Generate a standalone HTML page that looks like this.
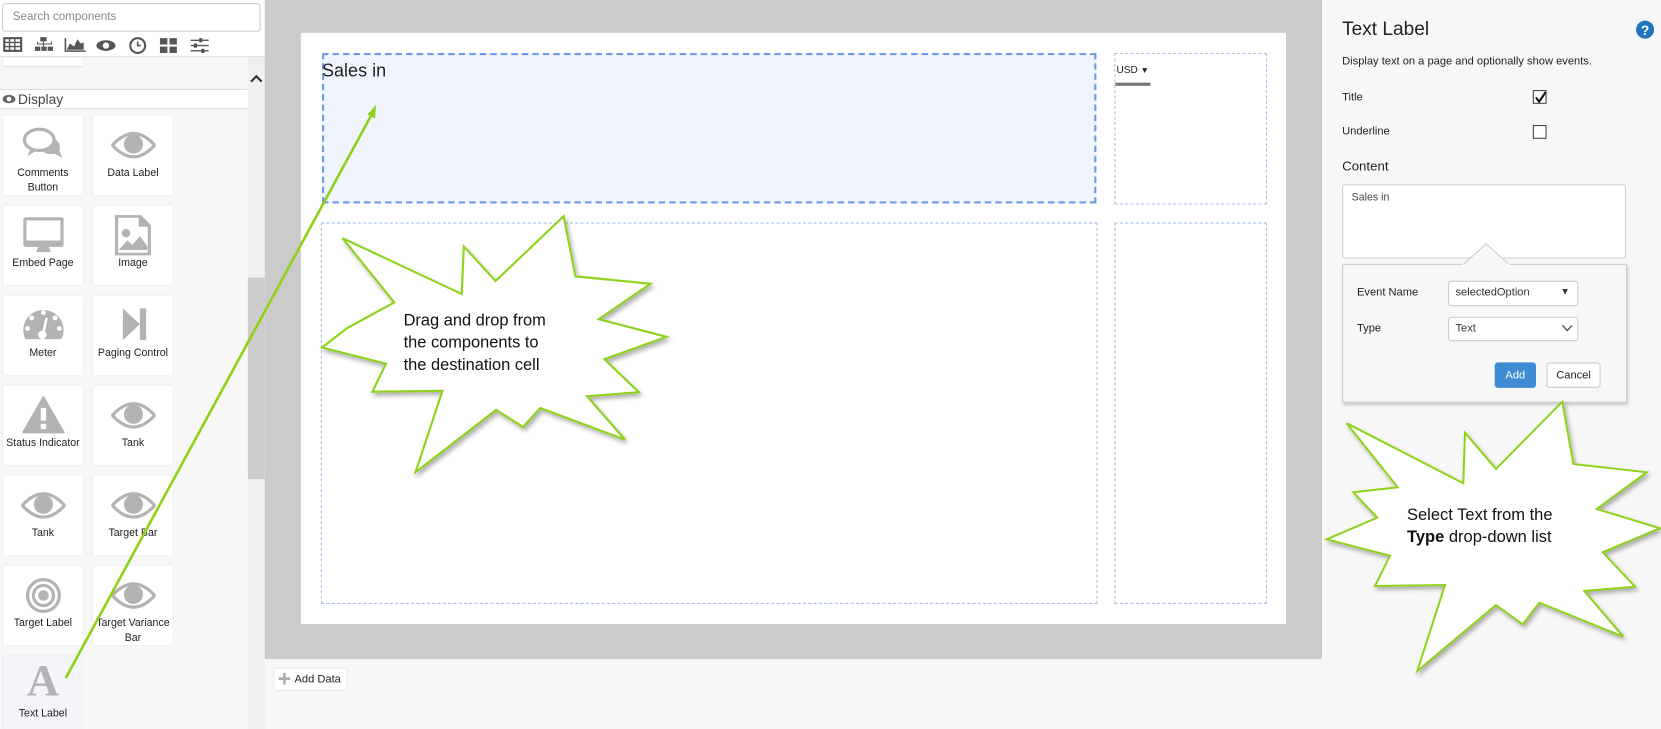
<!DOCTYPE html>
<html><head><meta charset="utf-8">
<style>
*{box-sizing:border-box;margin:0;padding:0}
html,body{width:1661px;height:729px;overflow:hidden;background:#f7f7f7;font-family:"Liberation Sans",sans-serif}
#c{position:absolute;left:0;top:0;width:1568px;height:688px;transform:scale(1.0593,1.0596);transform-origin:0 0;background:#f7f7f7}
.a{position:absolute}
.tile{position:absolute;width:75px;height:75px;background:#fff;box-shadow:0 0 2px rgba(0,0,0,.12);font-size:10px;color:#222;text-align:center;line-height:14px}
.tile svg{position:absolute;left:17px;top:9px}
.tile .l{position:absolute;left:0;right:0;top:48px}
.lbl{position:absolute;font-size:10.5px;color:#222}
.sel{position:absolute;background:#fff;border:1px solid #ccc;border-radius:3px;font-size:10.5px;color:#333;padding:4px 6px}
</style></head><body>
<div id="c">
<div class="a" style="left:0;top:0;width:250px;height:54px;background:#fff;border-bottom:1px solid #ddd"></div>
<div class="a" style="left:2px;top:3px;width:244px;height:27px;border:1px solid #ccc;border-radius:3px;background:#fff;font-size:11px;color:#888;padding:6px 9px">Search components</div>
<svg class="a" style="left:0;top:33px" width="220" height="20" viewBox="0 0 220 20" fill="#555">
<rect x="4" y="3" width="16" height="12" fill="none" stroke="#555" stroke-width="2"/><path d="M4 7h16M4 11h16M9 3v12M14 3v12" stroke="#555" stroke-width="1.3"/>
<path d="M38 2h6v4h-6zM35 6v3h14V6h-1v2H36V6z"/><rect x="33" y="11" width="5" height="4"/><rect x="39" y="11" width="5" height="4"/><rect x="45" y="11" width="5" height="4"/><path d="M41 6v5" stroke="#555"/>
<path d="M61 3v13h20v-1.5H62.5V3z"/><path d="M63 14l3-6 4 3 3-7 3 4 3-1v7z"/>
<ellipse cx="100" cy="10" rx="9" ry="5" fill="#555"/><circle cx="100" cy="10" r="3" fill="#fff"/>
<circle cx="130" cy="10" r="7" fill="none" stroke="#555" stroke-width="2"/><path d="M130 6v4h3" stroke="#555" stroke-width="1.6" fill="none"/>
<rect x="151" y="3" width="7" height="6"/><rect x="160" y="3" width="7" height="6"/><rect x="151" y="11" width="7" height="6"/><rect x="160" y="11" width="7" height="6"/>
<path d="M180 5h17M180 10h17M180 15h17" stroke="#555" stroke-width="1.3"/><rect x="188" y="3" width="3" height="4"/><rect x="183" y="8" width="3" height="4"/><rect x="190" y="13" width="3" height="4"/>
</svg>
<div class="a" style="left:3px;top:55px;width:75px;height:7px;background:#fff;box-shadow:0 1px 2px rgba(0,0,0,.12)"></div>
<div class="a" style="left:234px;top:54px;width:16px;height:634px;background:#f0f0f0"></div>
<div class="a" style="left:234px;top:262px;width:16px;height:190px;background:#cdcdcd"></div>
<svg class="a" style="left:236px;top:69px" width="12" height="10"><path d="M1 8l5-5 5 5" stroke="#333" stroke-width="2" fill="none"/></svg>
<div class="a" style="left:0;top:84px;width:234px;height:19px;background:#fff;border-top:1px solid #ddd;border-bottom:1px solid #ddd;font-size:13px;color:#444;padding:1px 0 0 17px">Display</div>
<svg class="a" style="left:2px;top:89px" width="13" height="9"><ellipse cx="6.5" cy="4.5" rx="6" ry="4" fill="#666"/><circle cx="6.5" cy="4.5" r="2.2" fill="#fff"/></svg>

<div class="tile" style="left:3px;top:109px"><svg width="42" height="38" viewBox="0 0 42 38"><path d="M29 12c6 2 9 7 7 12l3 7-8-4c-4 1-8 0-11-2" fill="#b3b3b3"/><ellipse cx="17" cy="14" rx="14" ry="10" fill="#fff" stroke="#b3b3b3" stroke-width="3"/><path d="M9 22l-3 7 9-5" fill="#b3b3b3"/></svg><div class="l">Comments<br>Button</div></div>
<div class="tile" style="left:88px;top:109px"><svg width="42" height="38" viewBox="0 0 42 38"><path d="M1 19Q21 -3 41 19Q21 41 1 19z" fill="none" stroke="#b3b3b3" stroke-width="3"/><circle cx="21" cy="18" r="9" fill="#b3b3b3"/></svg><div class="l">Data Label</div></div>
<div class="tile" style="left:3px;top:194px"><svg width="42" height="38" viewBox="0 0 42 38"><rect x="2" y="2" width="38" height="28" rx="2" fill="#b3b3b3"/><rect x="5" y="5" width="32" height="19" fill="#fff"/><path d="M16 30h10l2 5H14z" fill="#b3b3b3"/></svg><div class="l">Embed Page</div></div>
<div class="tile" style="left:88px;top:194px"><svg width="42" height="38" viewBox="0 0 42 38"><path d="M5 1h22l9 9v27H5z" fill="none" stroke="#b3b3b3" stroke-width="3"/><path d="M26 1v10h10" fill="#b3b3b3"/><circle cx="14" cy="17" r="4" fill="#b3b3b3"/><path d="M7 33l8-9 5 4 7-8 7 9v4z" fill="#b3b3b3"/></svg><div class="l">Image</div></div>
<div class="tile" style="left:3px;top:279px"><svg width="42" height="38" viewBox="0 0 42 38"><path d="M4 32A19 19 0 1 1 38 32Z" fill="#b3b3b3"/><circle cx="21" cy="7" r="2.3" fill="#fff"/><circle cx="10" cy="12" r="2.3" fill="#fff"/><circle cx="32" cy="12" r="2.3" fill="#fff"/><circle cx="6" cy="22" r="2.3" fill="#fff"/><circle cx="36" cy="22" r="2.3" fill="#fff"/><path d="M24 12l-3 14" stroke="#fff" stroke-width="2.5"/><circle cx="20" cy="28" r="4" fill="#fff"/></svg><div class="l">Meter</div></div>
<div class="tile" style="left:88px;top:279px"><svg width="42" height="38" viewBox="0 0 42 38"><path d="M11 3l16 15-16 15z" fill="#b3b3b3"/><rect x="27" y="3" width="6" height="30" fill="#b3b3b3"/></svg><div class="l">Paging Control</div></div>
<div class="tile" style="left:3px;top:364px"><svg width="42" height="38" viewBox="0 0 42 38"><path d="M21 2L40 35H2z" fill="#b3b3b3" stroke="#b3b3b3" stroke-width="2" stroke-linejoin="round"/><rect x="18.5" y="12" width="5" height="12" fill="#fff"/><rect x="18.5" y="27" width="5" height="5" fill="#fff"/></svg><div class="l">Status Indicator</div></div>
<div class="tile" style="left:88px;top:364px"><svg width="42" height="38" viewBox="0 0 42 38"><path d="M1 19Q21 -3 41 19Q21 41 1 19z" fill="none" stroke="#b3b3b3" stroke-width="3"/><circle cx="21" cy="18" r="9" fill="#b3b3b3"/></svg><div class="l">Tank</div></div>
<div class="tile" style="left:3px;top:449px"><svg width="42" height="38" viewBox="0 0 42 38"><path d="M1 19Q21 -3 41 19Q21 41 1 19z" fill="none" stroke="#b3b3b3" stroke-width="3"/><circle cx="21" cy="18" r="9" fill="#b3b3b3"/></svg><div class="l">Tank</div></div>
<div class="tile" style="left:88px;top:449px"><svg width="42" height="38" viewBox="0 0 42 38"><path d="M1 19Q21 -3 41 19Q21 41 1 19z" fill="none" stroke="#b3b3b3" stroke-width="3"/><circle cx="21" cy="18" r="9" fill="#b3b3b3"/></svg><div class="l">Target Bar</div></div>
<div class="tile" style="left:3px;top:534px"><svg width="42" height="38" viewBox="0 0 42 38"><circle cx="21" cy="19" r="15" fill="none" stroke="#b3b3b3" stroke-width="3"/><circle cx="21" cy="19" r="9.5" fill="none" stroke="#b3b3b3" stroke-width="3"/><circle cx="21" cy="19" r="5" fill="#b3b3b3"/></svg><div class="l">Target Label</div></div>
<div class="tile" style="left:88px;top:534px"><svg width="42" height="38" viewBox="0 0 42 38"><path d="M1 19Q21 -3 41 19Q21 41 1 19z" fill="none" stroke="#b3b3b3" stroke-width="3"/><circle cx="21" cy="18" r="9" fill="#b3b3b3"/></svg><div class="l">Target Variance<br>Bar</div></div>
<div class="tile" style="left:3px;top:619px;background:#f3f5fb;height:69px"><div style="position:absolute;left:0;right:0;top:3px;font-family:'Liberation Serif',serif;font-size:42px;line-height:42px;color:#b3b3b3;font-weight:bold">A</div><div class="l">Text Label</div></div>

<div class="a" style="left:250px;top:0;width:998px;height:622px;background:#cbcbcb"></div>
<div class="a" style="left:284px;top:31px;width:930px;height:558px;background:#fff"></div>
<div class="a" style="left:304px;top:50px;width:731px;height:142px;background:#f0f4fc;border:2px dashed #6f9be6"></div>
<div class="a" style="left:304px;top:57px;font-size:17px;color:#222">Sales in</div>
<div class="a" style="left:1052px;top:50px;width:144px;height:143px;border:1px dashed #a9c0ea"></div>
<div class="a" style="left:1054px;top:61px;font-size:9.5px;color:#222">USD <span style="font-size:8px">▼</span></div>
<div class="a" style="left:1053px;top:78px;width:33px;height:3px;background:#777"></div>
<div class="a" style="left:303px;top:210px;width:733px;height:360px;border:1px dashed #a9c0ea"></div>
<div class="a" style="left:1052px;top:210px;width:144px;height:360px;border:1px dashed #a9c0ea"></div>
<div class="a" style="left:259px;top:631px;width:68px;height:20px;background:#fff;box-shadow:0 0 2px rgba(0,0,0,.15);font-size:10.5px;color:#222;padding:4px 0 0 19px">Add Data</div>
<svg class="a" style="left:263px;top:635px" width="11" height="11"><path d="M5.5 0v11M0 5.5h11" stroke="#aaa" stroke-width="2.4"/></svg>

<div class="a" style="left:1267px;top:17px;font-size:18px;color:#222">Text Label</div>
<svg class="a" style="left:1544px;top:19px" width="18" height="18"><circle cx="9" cy="9" r="8.5" fill="#1e75bd"/><text x="9" y="14" text-anchor="middle" font-family="Liberation Sans" font-weight="bold" font-size="13" fill="#fff">?</text></svg>
<div class="a" style="left:1267px;top:52px;font-size:10.5px;color:#222">Display text on a page and optionally show events.</div>
<div class="lbl" style="left:1267px;top:86px">Title</div>
<div class="a" style="left:1447px;top:85px;width:13px;height:13px;border:1px solid #444;background:#fff"></div>
<svg class="a" style="left:1448px;top:86px" width="12" height="12"><path d="M2 6l3 4 6-9" stroke="#111" stroke-width="2" fill="none"/></svg>
<div class="lbl" style="left:1267px;top:118px">Underline</div>
<div class="a" style="left:1447px;top:118px;width:13px;height:13px;border:1px solid #444;background:#fff"></div>
<div class="a" style="left:1267px;top:150px;font-size:12.5px;color:#222">Content</div>
<div class="a" style="left:1267px;top:174px;width:268px;height:70px;border:1px solid #ccc;border-radius:3px;background:#fff;font-size:10px;color:#444;padding:6px 8px">Sales in</div>
<div class="a" style="left:1267px;top:249px;width:269px;height:131px;background:#f7f7f7;border:1px solid #ccc;box-shadow:1px 2px 3px rgba(0,0,0,.2)"></div>
<svg class="a" style="left:1381px;top:229px" width="44" height="22"><path d="M0 21L22 1 44 21" fill="#f7f7f7" stroke="#ccc"/><rect x="0" y="20" width="44" height="3" fill="#f7f7f7"/></svg>
<div class="lbl" style="left:1281px;top:270px">Event Name</div>
<div class="sel" style="left:1367px;top:265px;width:123px;height:24px">selectedOption<span style="position:absolute;right:7px;top:4px;font-size:9px">▼</span></div>
<div class="lbl" style="left:1281px;top:304px">Type</div>
<div class="sel" style="left:1367px;top:299px;width:123px;height:23px">Text</div>
<svg class="a" style="left:1474px;top:306px" width="11" height="8"><path d="M1 1l4.5 5L10 1" stroke="#555" stroke-width="1.3" fill="none"/></svg>
<div class="a" style="left:1411px;top:342px;width:39px;height:24px;background:#3d8bd3;border-radius:3px;color:#fff;font-size:10.5px;text-align:center;line-height:24px">Add</div>
<div class="a" style="left:1460px;top:342px;width:51px;height:24px;background:#fff;border:1px solid #ccc;border-radius:3px;color:#222;font-size:10.5px;text-align:center;line-height:22px">Cancel</div>
</div>

<svg class="a" style="left:0;top:0" width="1661" height="729" viewBox="0 0 1661 729">
<defs><filter id="sh" x="-10%" y="-10%" width="130%" height="130%"><feDropShadow dx="2" dy="3" stdDeviation="2" flood-color="#000" flood-opacity=".3"/></filter></defs>
<g transform="scale(1.0593,1.0596)">
<line x1="62" y1="640" x2="352" y2="106" stroke="#8ed21c" stroke-width="2.5"/>
<path d="M355 99l-1 13-7-4z" fill="#8ed21c"/>
<polygon filter="url(#sh)" fill="#fff" stroke="#8ed21c" stroke-width="2" points="323.4,224.8 435.9,277.5 437.9,232.7 467.8,265.2 532.1,204.1 543.2,260.8 614.1,267.8 565.3,301.2 629,317.9 570.6,339 603,370.1 554.2,374 590,414.9 510,385 493.8,403 468.4,386.8 392.3,445.6 417.7,368.8 351.5,369.7 364.4,343.3 304,328 328,309.5 372.2,285.4"/>
<text font-family="Liberation Sans" font-size="15.5" fill="#111"><tspan x="381" y="307">Drag and drop from</tspan><tspan x="381" y="328">the components to</tspan><tspan x="381" y="349">the destination cell</tspan></text>
</g>
<polygon filter="url(#sh)" fill="#fff" stroke="#8ed21c" stroke-width="2" points="1346.7,423.3 1463.3,483.3 1465,432.7 1496,469 1562.3,401.7 1573.3,464 1646.7,472.3 1596.7,509 1660,528.3 1602.7,552.3 1635,586.7 1584.3,591 1623.3,636.7 1539.3,602.7 1522.7,624.3 1496,605 1417.3,671 1445,585 1375,586 1390,555.7 1326.7,539.3 1377.3,517.7 1353.3,492.3 1397.7,487.3"/>
<text font-family="Liberation Sans" font-size="16.5" fill="#111"><tspan x="1407" y="520">Select Text from the</tspan><tspan x="1407" y="542"><tspan font-weight="bold">Type</tspan> drop-down list</tspan></text>
</svg>
</body></html>
